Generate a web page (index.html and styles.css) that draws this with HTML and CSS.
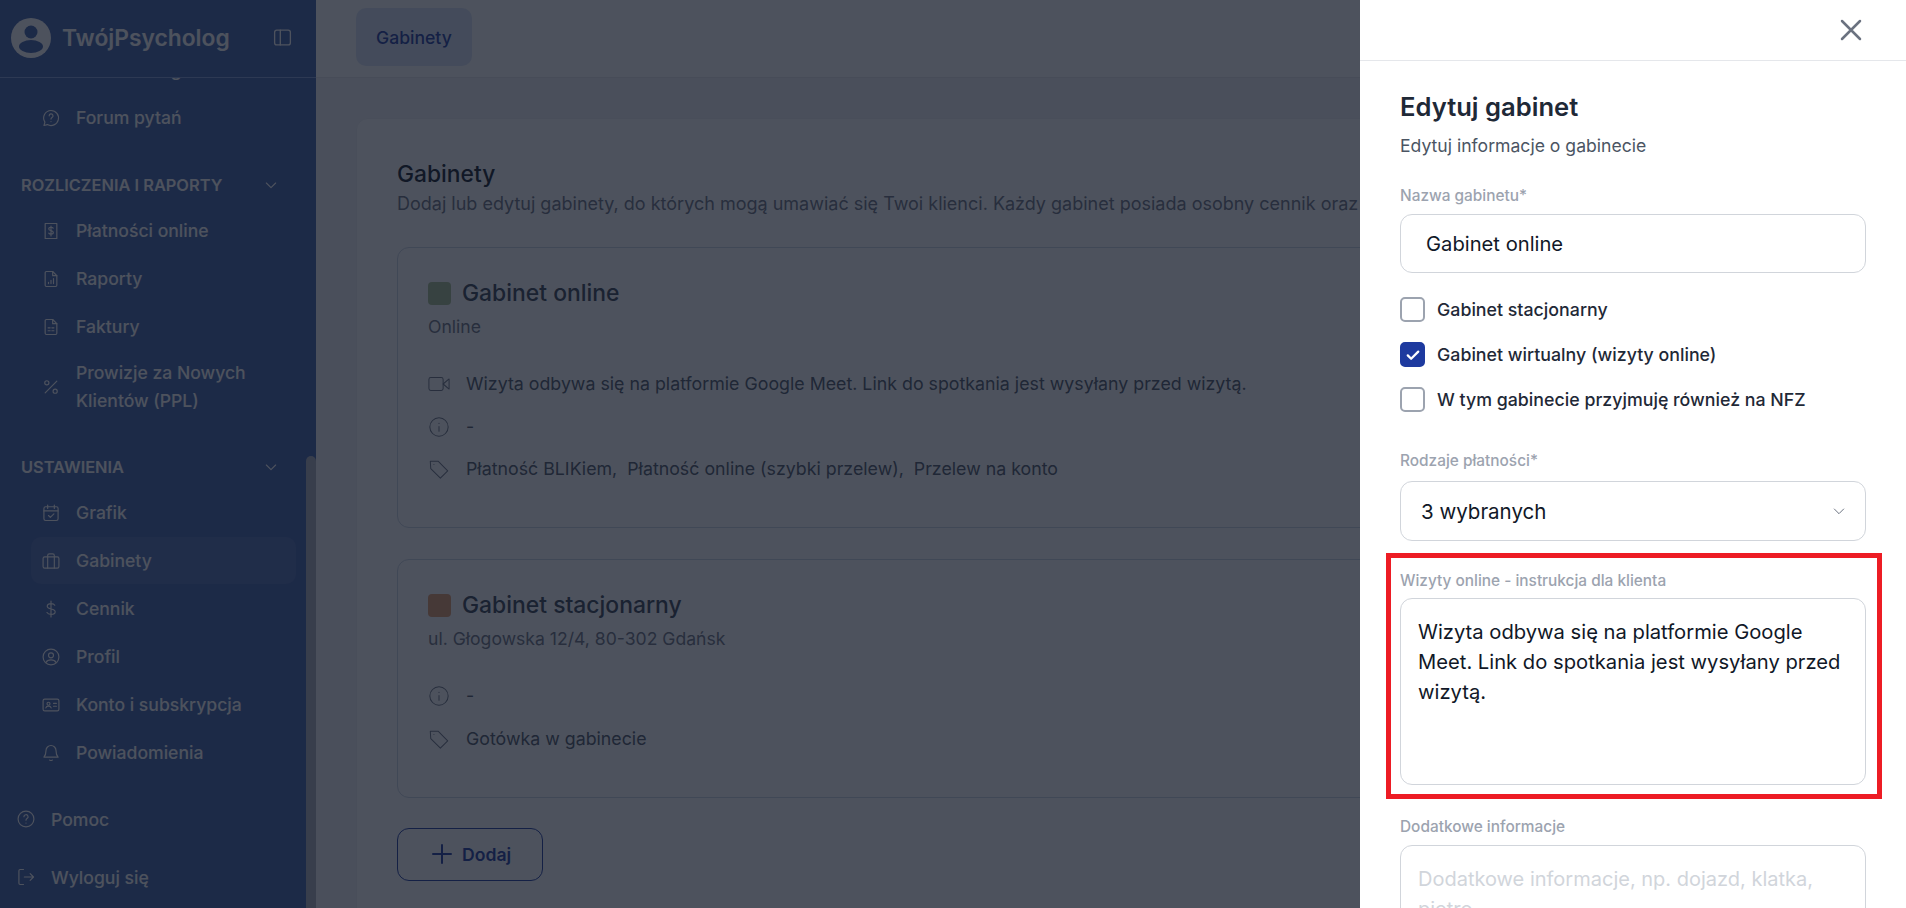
FILE: index.html
```html
<!DOCTYPE html>
<html lang="pl">
<head>
    <meta charset="UTF-8">
    <meta name="viewport" content="width=device-width, initial-scale=1.0">
    <title>TwójPsycholog - Gabinety</title>
    <link rel="stylesheet" href="styles.css">
</head>
<body>
    <aside class="sidebar">
        <div class="brand">
            <svg class="brand-logo" viewBox="0 0 40 40"><circle cx="20" cy="20" r="20" fill="currentColor"/><circle cx="20" cy="14" r="6.5" fill="#3e5fa8"/><ellipse cx="20" cy="28.5" rx="12" ry="6.5" fill="#3e5fa8"/></svg>
            <span class="brand-name">TwójPsycholog</span>
            <svg class="brand-toggle" viewBox="0 0 24 24"><rect x="3" y="3.5" width="18" height="17" rx="2.5"/><path d="M9.5 3.5v17"/></svg>
        </div>

        <nav class="nav">
            <a class="nav-item nav-item-clipped"><svg class="icon" viewBox="0 0 24 24"><circle cx="12" cy="12" r="9"/></svg>Strona i blog online</a>
            <a class="nav-item"><svg class="icon" viewBox="0 0 24 24"><path d="M12 3a9 9 0 1 1-4.3 16.9L3.6 21l1.1-4A9 9 0 0 1 12 3z"/><path d="M9.8 9.4a2.3 2.3 0 1 1 3.4 2c-.8.5-1.2 1-1.2 1.9M12 16.2v.1"/></svg>Forum pytań</a>

            <div class="nav-section">ROZLICZENIA I RAPORTY<svg class="nav-chevron" viewBox="0 0 24 24"><path d="M5 9l7 7 7-7"/></svg></div>
            <a class="nav-item"><svg class="icon" viewBox="0 0 24 24"><path d="M5 3h14v18H5z"/><path d="M14.6 8.6c-.5-.8-1.500-1.100-2.600-1.100-1.500 0-2.700.7-2.700 2 0 2.700 5.500 1.500 5.500 4.300 0 1.300-1.300 2-2.800 2-1.200 0-2.200-.4-2.700-1.200M12 6v12"/></svg>Płatności online</a>
            <a class="nav-item"><svg class="icon" viewBox="0 0 24 24"><path d="M14 3H6.500A1.500 1.500 0 0 0 5 4.500v15A1.500 1.500 0 0 0 6.500 21h11a1.500 1.500 0 0 0 1.500-1.500V8z"/><path d="M14 3v5h5M9 17.500v-1.500M12 17.500v-4M15 17.500v-6"/></svg>Raporty</a>
            <a class="nav-item"><svg class="icon" viewBox="0 0 24 24"><path d="M14 3H6.500A1.500 1.500 0 0 0 5 4.500v15A1.500 1.500 0 0 0 6.500 21h11a1.500 1.500 0 0 0 1.500-1.500V8z"/><path d="M14 3v5h5M8.500 13h2.500M13 13h2.500M8.500 16.500h2.500M13 16.500h2.500"/></svg>Faktury</a>
            <a class="nav-item nav-item-tall"><svg class="icon" viewBox="0 0 24 24"><path d="M19 5L5 19"/><circle cx="7" cy="7" r="2.500"/><circle cx="17" cy="17" r="2.500"/></svg><span>Prowizje za Nowych Klientów (PPL)</span></a>

            <div class="nav-section">USTAWIENIA<svg class="nav-chevron" viewBox="0 0 24 24"><path d="M5 9l7 7 7-7"/></svg></div>
            <a class="nav-item"><svg class="icon" viewBox="0 0 24 24"><rect x="3.500" y="4.500" width="17" height="16.500" rx="2"/><path d="M3.500 9.500h17M8 2.500v4M16 2.500v4M9 15l2.200 2.200L15.500 13"/></svg>Grafik</a>
            <a class="nav-item nav-item-active"><svg class="icon" viewBox="0 0 24 24"><rect x="2.500" y="7" width="19" height="13.500" rx="2"/><path d="M8 20.500V5.500A2 2 0 0 1 10 3.500h4a2 2 0 0 1 2 2v15"/></svg>Gabinety</a>
            <a class="nav-item"><svg class="icon" viewBox="0 0 24 24"><path d="M16.500 7.500c-.7-1.300-2.300-2-4.500-2-2.600 0-4.500 1.200-4.500 3.200 0 4.300 9.500 2.300 9.500 6.600 0 2-2 3.200-5 3.200-2.300 0-4-.8-4.800-2.200M12 2.500v19"/></svg>Cennik</a>
            <a class="nav-item"><svg class="icon" viewBox="0 0 24 24"><circle cx="12" cy="12" r="9.500"/><circle cx="12" cy="10" r="3"/><path d="M6 18.500c1-2 3.200-3 6-3s5 1 6 3"/></svg>Profil</a>
            <a class="nav-item"><svg class="icon" viewBox="0 0 24 24"><rect x="2.500" y="5" width="19" height="14" rx="2"/><circle cx="9" cy="10.500" r="1.800"/><path d="M5.800 15.500c.4-1.500 1.700-2.200 3.200-2.200s2.800.7 3.200 2.200M15 10h3.500M15 13.500h3.500"/></svg>Konto i subskrypcja</a>
            <a class="nav-item"><svg class="icon" viewBox="0 0 24 24"><path d="M12 3a6 6 0 0 0-6 6c0 4.500-1.200 6.500-2.500 8h17c-1.300-1.500-2.500-3.500-2.500-8a6 6 0 0 0-6-6z"/><path d="M10.500 20.500c.5.700 2.500.7 3 0"/></svg>Powiadomienia</a>
        </nav>

        <div class="sidebar-footer">
            <a class="footer-item"><svg class="icon" viewBox="0 0 24 24"><circle cx="12" cy="12" r="9.500"/><path d="M9.500 9.300a2.500 2.500 0 1 1 3.700 2.200c-.8.500-1.200 1-1.200 2M12 16.800v.1"/></svg>Pomoc</a>
            <a class="footer-item"><svg class="icon" viewBox="0 0 24 24"><path d="M9 3H5a1.500 1.500 0 0 0-1.500 1.500v15A1.500 1.500 0 0 0 5 21h4M10 12h11M17 8l4 4-4 4"/></svg>Wyloguj się</a>
        </div>
        <div class="sidebar-thumb"></div>
    </aside>

    <main class="main">
        <div class="topbar">
            <a class="tab">Gabinety</a>
        </div>
        <div class="content">
            <section class="card">
                <h2 class="card-title">Gabinety</h2>
                <p class="card-desc">Dodaj lub edytuj gabinety, do których mogą umawiać się Twoi klienci. Każdy gabinet posiada osobny cennik oraz grafik.</p>

                <div class="office">
                    <div class="office-head"><span class="swatch swatch-green"></span><h3>Gabinet online</h3></div>
                    <p class="office-address">Online</p>
                    <div class="office-rows">
                        <div class="office-row"><svg class="row-icon" viewBox="0 0 24 24"><rect x="1" y="5" width="15.500" height="14" rx="2"/><path d="M16.500 12L23 6.500v11z"/></svg>Wizyta odbywa się na platformie Google Meet. Link do spotkania jest wysyłany przed wizytą.</div>
                        <div class="office-row"><svg class="row-icon" viewBox="0 0 24 24"><circle cx="12" cy="12" r="10"/><path d="M12 11.500v5M12 8v.1"/></svg>-</div>
                        <div class="office-row"><svg class="row-icon" viewBox="0 0 24 24"><path d="M2.500 3.500h8.500l10.500 10.500-8 8L3 11.500z"/><path d="M6.500 7v.1"/></svg>Płatność BLIKiem,&nbsp; Płatność online (szybki przelew),&nbsp; Przelew na konto</div>
                    </div>
                </div>

                <div class="office">
                    <div class="office-head"><span class="swatch swatch-brown"></span><h3>Gabinet stacjonarny</h3></div>
                    <p class="office-address">ul. Głogowska 12/4, 80-302 Gdańsk</p>
                    <div class="office-rows">
                        <div class="office-row"><svg class="row-icon" viewBox="0 0 24 24"><circle cx="12" cy="12" r="10"/><path d="M12 11.500v5M12 8v.1"/></svg>-</div>
                        <div class="office-row"><svg class="row-icon" viewBox="0 0 24 24"><path d="M2.500 3.500h8.500l10.500 10.500-8 8L3 11.500z"/><path d="M6.500 7v.1"/></svg>Gotówka w gabinecie</div>
                    </div>
                </div>

                <button class="add-btn" type="button"><svg viewBox="0 0 24 24"><path d="M12 3v18M3 12h18"/></svg>Dodaj</button>
            </section>
        </div>
    </main>

    <div class="overlay"></div>

    <aside class="panel">
        <div class="panel-head">
            <svg class="panel-close" viewBox="0 0 24 24"><path d="M3 3l18 18M21 3L3 21"/></svg>
        </div>
        <form class="panel-body">
            <h2 class="panel-title">Edytuj gabinet</h2>
            <p class="panel-sub">Edytuj informacje o gabinecie</p>

            <label class="field-label field-first">Nazwa gabinetu*</label>
            <input class="text-input" type="text" value="Gabinet online">

            <div class="checks">
                <div class="check"><span class="check-box"></span>Gabinet stacjonarny</div>
                <div class="check"><span class="check-box check-box-on"><svg viewBox="0 0 24 24"><path d="M5 12.500l4.500 4.500L19 7.500"/></svg></span>Gabinet wirtualny (wizyty online)</div>
                <div class="check"><span class="check-box"></span>W tym gabinecie przyjmuję również na NFZ</div>
            </div>

            <label class="field-label field-pay">Rodzaje płatności*</label>
            <div class="select">3 wybranych<svg viewBox="0 0 24 24"><path d="M5 9l7 7 7-7"/></svg></div>

            <div class="field-marked">
                <label class="field-label">Wizyty online - instrukcja dla klienta</label>
                <textarea class="text-area">Wizyta odbywa się na platformie Google Meet. Link do spotkania jest wysyłany przed wizytą.</textarea>
                <div class="marker"></div>
            </div>

            <label class="field-label field-extra">Dodatkowe informacje</label>
            <textarea class="text-area" placeholder="Dodatkowe informacje, np. dojazd, klatka, piętro"></textarea>
        </form>
    </aside>
</body>
</html>
```

FILE: styles.css
```css
* {
    box-sizing: border-box;
}
html, body {
    height: 100%;
}
body {
    margin: 0;
    display: flex;
    overflow: hidden;
    font-family: Inter, "Noto Sans", sans-serif;
    color: #111827;
    background: #f3f4f6;
}
h2, h3, p {
    margin: 0;
}
svg {
    fill: none;
    stroke: currentColor;
    stroke-linecap: round;
    stroke-linejoin: round;
    flex-shrink: 0;
}

/* sidebar */
.sidebar {
    position: relative;
    width: 316px;
    height: 908px;
    flex-shrink: 0;
    display: flex;
    flex-direction: column;
    background: #3e5fa8;
    color: #fff;
}
.brand {
    height: 78px;
    flex-shrink: 0;
    display: flex;
    align-items: center;
    padding: 0 23px 2px 11px;
    border-bottom: 1px solid #7f9bd6;
}
.brand-logo {
    width: 40px;
    height: 40px;
    stroke: none;
}
.brand-name {
    margin-left: 11px;
    font-size: 22.8px;
    font-weight: 600;
}
.brand-toggle {
    width: 21px;
    height: 21px;
    margin-left: auto;
    stroke-width: 1.5;
}
.nav {
    flex: 1;
    overflow: hidden;
    display: flex;
    flex-direction: column;
    padding: 0 20px 0 31px;
}
.nav-item {
    display: flex;
    align-items: center;
    gap: 15px;
    min-height: 47px;
    margin-bottom: 1px;
    padding: 0 10px;
    border-radius: 10px;
    font-size: 17.6px;
    font-weight: 500;
    line-height: 28px;
    flex-shrink: 0;
}
.nav-item-clipped {
    margin-top: -32px;
}
.nav-item-tall {
    min-height: 72px;
}
.nav-item-active {
    background: rgba(255, 255, 255, .08);
}
.icon {
    width: 20px;
    height: 20px;
    stroke-width: 1.4;
}
.nav-section {
    display: flex;
    align-items: center;
    justify-content: space-between;
    height: 28px;
    margin: 29px 17px 8px -10px;
    font-size: 16.4px;
    font-weight: 600;
    flex-shrink: 0;
}
.nav-chevron {
    width: 16px;
    height: 16px;
    stroke-width: 1.6;
}
.sidebar-footer {
    flex-shrink: 0;
    display: flex;
    flex-direction: column;
    gap: 10px;
    padding: 0 0 7px 16px;
}
.footer-item {
    display: flex;
    align-items: center;
    gap: 15px;
    height: 48px;
    font-size: 17.6px;
    font-weight: 500;
}
.sidebar-thumb {
    position: absolute;
    right: 0;
    top: 456px;
    bottom: 0;
    width: 10px;
    border-radius: 5px 5px 0 0;
    background: #acb1bb;
}

/* main */
.main {
    flex: 1;
    min-width: 0;
}
.topbar {
    height: 78px;
    padding: 8px 40px;
    background: #fff;
    border-bottom: 1px solid #e5e7eb;
}
.tab {
    display: inline-flex;
    align-items: center;
    height: 58px;
    padding: 0 20px;
    border-radius: 10px;
    background: #dbe4f5;
    color: #1e3a9f;
    font-size: 17.6px;
    font-weight: 500;
}
.content {
    padding: 40px;
}
.card {
    padding: 39px 40px 40px;
    background: #fff;
    border: 1px solid #eef0f3;
    border-radius: 12px;
}
.card-title {
    font-size: 22.8px;
    font-weight: 500;
    line-height: 32px;
}
.card-desc {
    font-size: 18px;
    line-height: 28px;
    color: #6b7280;
    white-space: nowrap;
}
.office {
    margin: 29px 0 31px;
    padding: 29px 31px 45px 30px;
    border: 1px solid #cbd5e1;
    border-radius: 12px;
}
.office-head {
    display: flex;
    align-items: center;
    gap: 11px;
    height: 32px;
}
.office-head h3 {
    font-size: 22.9px;
    font-weight: 500;
    color: #374151;
}
.swatch {
    width: 23px;
    height: 23px;
    border-radius: 4px;
}
.swatch-green {
    background: #a9c08e;
}
.swatch-brown {
    background: #e39a6a;
}
.office-address {
    margin-top: 6px;
    font-size: 17.6px;
    line-height: 24px;
    color: #6b7280;
}
.office-rows {
    display: flex;
    flex-direction: column;
    gap: 16.5px;
    margin-top: 32px;
}
.office-row {
    display: flex;
    align-items: center;
    gap: 16px;
    font-size: 17.8px;
    line-height: 26px;
    color: #4b5563;
}
.row-icon {
    width: 22px;
    height: 22px;
    stroke-width: 1.1;
    color: #6b7280;
}
.add-btn {
    display: flex;
    align-items: center;
    gap: 8px;
    width: 146px;
    height: 53px;
    margin-top: -1px;
    padding: 0 0 0 32px;
    background: none;
    border: 1px solid #1e3a9f;
    border-radius: 12px;
    color: #1e3a9f;
    font-family: inherit;
    font-size: 17.6px;
    font-weight: 600;
}
.add-btn svg {
    width: 24px;
    height: 24px;
    stroke-width: 2;
}

/* modal */
.overlay {
    position: fixed;
    inset: 0;
    background: rgba(17, 24, 39, .75);
    backdrop-filter: blur(.5px);
}
.panel {
    position: fixed;
    top: 0;
    right: 0;
    bottom: 0;
    width: 546px;
    display: flex;
    flex-direction: column;
    background: #fff;
}
.panel-head {
    height: 61px;
    flex-shrink: 0;
    display: flex;
    align-items: center;
    justify-content: flex-end;
    padding: 0 43px 1px 0;
    border-bottom: 1px solid #e5e7eb;
}
.panel-close {
    width: 24px;
    height: 24px;
    stroke-width: 2.5;
    color: #6b7280;
}
.panel-body {
    flex: 1;
    overflow: hidden;
    padding: 30px 40px 0;
}
.panel-title {
    font-size: 25.6px;
    font-weight: 600;
    line-height: 32px;
    color: #1f2937;
}
.panel-sub {
    margin-top: 11px;
    font-size: 17.6px;
    line-height: 24px;
    color: #4b5563;
}
.field-label {
    display: block;
    font-size: 15.4px;
    font-weight: 500;
    line-height: 20px;
    color: #9ca3af;
}
.field-first {
    margin: 28px 0 8px;
}
.text-input, .text-area, .select {
    display: block;
    width: 100%;
    background: #fff;
    border: 1px solid #d1d5db;
    border-radius: 12px;
    color: #111827;
    font-family: inherit;
    font-size: 20.2px;
    outline: none;
}
.text-input {
    height: 59px;
    padding: 0 25px;
}
.checks {
    display: flex;
    flex-direction: column;
    gap: 20px;
    margin-top: 24px;
}
.check {
    display: flex;
    align-items: center;
    gap: 12px;
    height: 25px;
    font-size: 17.8px;
    font-weight: 500;
    color: #1f2937;
}
.check-box {
    width: 25px;
    height: 25px;
    display: flex;
    align-items: center;
    justify-content: center;
    border: 2px solid #9ca3af;
    border-radius: 5px;
}
.check-box-on {
    background: #1e3a9f;
    border-color: #1e3a9f;
}
.check-box-on svg {
    width: 18px;
    height: 18px;
    stroke: #fff;
    stroke-width: 3;
}
.field-pay {
    margin: 39px 0 10px;
}
.select {
    height: 60px;
    display: flex;
    align-items: center;
    justify-content: space-between;
    padding: 0 18px 0 20px;
    font-size: 20.5px;
}
.select svg {
    width: 16px;
    height: 16px;
    stroke-width: 1.5;
    color: #6b7280;
}
.field-marked {
    position: relative;
    margin-top: 30px;
}
.field-marked .field-label {
    margin-bottom: 7px;
}
.text-area {
    height: 187px;
    padding: 18px 17px;
    line-height: 30px;
    resize: none;
    overflow: hidden;
}
.text-area::placeholder {
    color: #d1d5db;
    font-size: 20px;
}
.marker {
    position: absolute;
    inset: -18px -16px -14px -14px;
    border: 5px solid #ed1c24;
    pointer-events: none;
}
.field-extra {
    margin: 32px 0 8px;
}
```
